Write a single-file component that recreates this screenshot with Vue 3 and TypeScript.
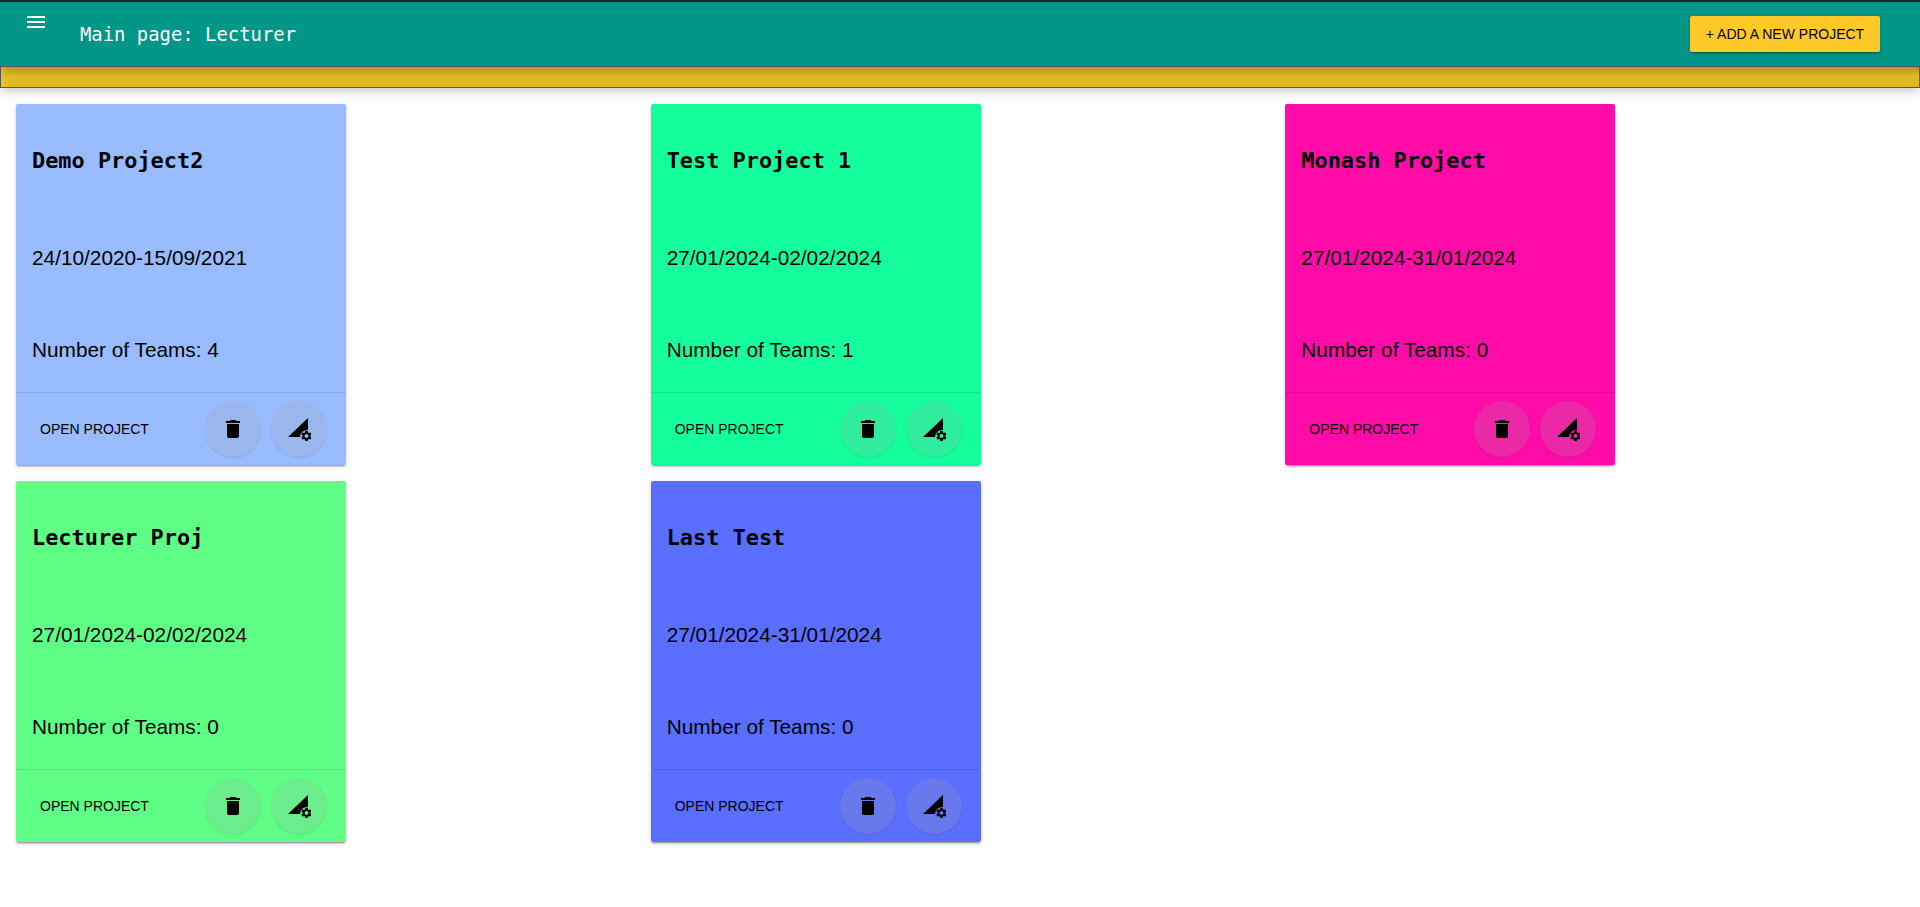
<script setup lang="ts">
interface Project {
  name: string
  dates: string
  teams: number
  color: string
}

const projects: Project[] = [
  { name: 'Demo Project2', dates: '24/10/2020-15/09/2021', teams: 4, color: '#99bbff' },
  { name: 'Test Project 1', dates: '27/01/2024-02/02/2024', teams: 1, color: '#14ff9c' },
  { name: 'Monash Project', dates: '27/01/2024-31/01/2024', teams: 0, color: '#ff0ba8' },
  { name: 'Lecturer Proj', dates: '27/01/2024-02/02/2024', teams: 0, color: '#5fff85' },
  { name: 'Last Test', dates: '27/01/2024-31/01/2024', teams: 0, color: '#5a6eff' },
]
</script>

<template>
  <div class="page">
    <header class="appbar">
      <div class="toolbar">
        <button class="menu" aria-label="menu">
          <svg viewBox="0 0 24 24" width="24" height="24"><path d="M3 18h18v-2H3v2zm0-5h18v-2H3v2zm0-7v2h18V6H3z" fill="#fff" /></svg>
        </button>
        <h1 class="heading">Main page: Lecturer</h1>
        <button class="add">+ Add a new project</button>
      </div>
      <div class="strip"></div>
    </header>
    <main class="grid">
      <article v-for="p in projects" :key="p.name" class="card" :style="{ backgroundColor: p.color }">
        <div class="content">
          <h2 class="title">{{ p.name }}</h2>
          <p class="dates">{{ p.dates }}</p>
          <p class="teams">Number of Teams: {{ p.teams }}</p>
        </div>
        <div class="actions">
          <button class="open">Open project</button>
          <div class="icons">
            <button class="round" aria-label="delete">
              <svg viewBox="0 0 24 24" width="24" height="24"><path d="M6 19c0 1.1.9 2 2 2h8c1.1 0 2-.9 2-2V7H6v12zM19 4h-3.5l-1-1h-5l-1 1H5v2h14V4z" /></svg>
            </button>
            <button class="round" aria-label="settings">
              <svg viewBox="0 0 24 24" width="24" height="24">
                <path d="M1 20 21 1v12A7 7 0 0 0 13 20z" />
                <path transform="translate(13.02 12.52) scale(.54)" d="M19.14 12.94c.04-.3.06-.61.06-.94 0-.32-.02-.64-.07-.94l2.03-1.58a.49.49 0 0 0 .12-.61l-1.92-3.32a.488.488 0 0 0-.59-.22l-2.39.96c-.5-.38-1.03-.7-1.62-.94l-.36-2.54a.484.484 0 0 0-.48-.41h-3.84c-.24 0-.43.17-.47.41l-.36 2.54c-.59.24-1.13.57-1.62.94l-2.39-.96c-.22-.08-.47 0-.59.22L2.74 8.87c-.12.21-.08.47.12.61l2.03 1.58c-.05.3-.09.63-.09.94s.02.64.07.94l-2.03 1.58a.49.49 0 0 0-.12.61l1.92 3.32c.12.22.37.29.59.22l2.39-.96c.5.38 1.03.7 1.62.94l.36 2.54c.05.24.24.41.48.41h3.84c.24 0 .44-.17.47-.41l.36-2.54c.59-.24 1.13-.56 1.62-.94l2.39.96c.22.08.47 0 .59-.22l1.92-3.32c.12-.22.07-.47-.12-.61l-2.01-1.58zM12 15.6c-1.98 0-3.6-1.62-3.6-3.6s1.62-3.6 3.6-3.6 3.6 1.62 3.6 3.6-1.62 3.6-3.6 3.6z" />
              </svg>
            </button>
          </div>
        </div>
      </article>
    </main>
  </div>
</template>

<style>
html, body { margin: 0; background: #fff; }
</style>

<style scoped>
.page {
  min-height: 907px;
  font-family: "Liberation Sans", Arial, sans-serif;
  color: #000;
  box-sizing: border-box;
}
button { font-family: inherit; border: 0; cursor: pointer; color: inherit; }
.appbar {
  box-shadow: 0 4px 8px -1px rgba(0,0,0,.12), 0 6px 12px rgba(0,0,0,.05), 0 1px 18px rgba(0,0,0,.06);
}
.toolbar {
  height: 64px;
  background: #009688;
  border-top: 2px solid #222;
  display: flex;
  align-items: flex-start;
}
.menu {
  background: none;
  padding: 0;
  margin: 8px 0 0 24px;
  width: 24px;
  height: 24px;
}
.heading {
  margin: 19px 0 0 32px;
  font: 400 18.9px/26px "DejaVu Sans Mono", monospace;
  color: #fff;
}
.add {
  margin: 14px 40px 0 auto;
  width: 190px;
  height: 36px;
  background: #ffca28;
  border-radius: 2px;
  font-size: 14px;
  text-transform: uppercase;
  box-shadow: 0 3px 1px -2px rgba(0,0,0,.2), 0 2px 2px rgba(0,0,0,.14), 0 1px 5px rgba(0,0,0,.12);
}
.strip {
  height: 20px;
  border: 1px solid #555;
  background: linear-gradient(180deg, #b8951f, #dfb824 50%, #e0b926);
  box-shadow: inset 12px 0 10px -10px rgba(255,210,50,.6);
}
.grid {
  display: grid;
  grid-template-columns: repeat(3, 1fr);
  row-gap: 16px;
  padding: 16px 0 0 16px;
}
.card {
  width: 330px;
  height: 361px;
  border-radius: 2px;
  display: flex;
  flex-direction: column;
  box-shadow: 0 3px 1px -2px rgba(0,0,0,.2), 0 2px 2px rgba(0,0,0,.14), 0 1px 5px rgba(0,0,0,.12);
}
.content {
  height: 288px;
  padding: 0 16px;
  display: flex;
  flex-direction: column;
}
.title {
  margin: 41px 0 0;
  font: 700 21.9px/32px "DejaVu Sans Mono", monospace;
}
.dates {
  margin: 69px 0 0;
  font-size: 20.8px;
  line-height: 24px;
}
.teams {
  margin: 68px 0 0;
  font-size: 20.8px;
  line-height: 24px;
}
.actions {
  height: 72px;
  border-top: 1px solid rgba(0,0,0,.1);
  display: flex;
  align-items: center;
  padding: 0 19px 0 16px;
}
.open {
  background: none;
  padding: 0 8px;
  font-size: 14px;
  text-transform: uppercase;
  height: 36px;
}
.icons { margin-left: auto; display: flex; gap: 10px; }
.round {
  width: 56px;
  height: 56px;
  border-radius: 50%;
  padding: 0;
  background: rgba(155,165,165,.2);
  display: flex;
  align-items: center;
  justify-content: center;
  box-shadow: 0 1px 2px rgba(0,0,0,.1);
}
</style>
